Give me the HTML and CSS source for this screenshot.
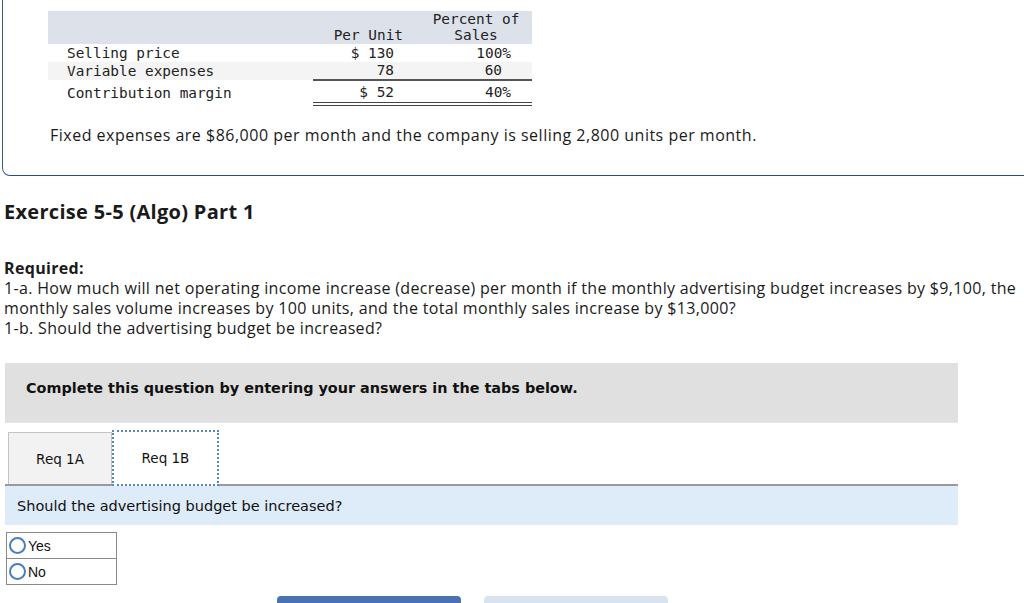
FILE: index.html
```html
<!DOCTYPE html>
<html>
<head>
<meta charset="utf-8">
<link rel="stylesheet" href="styles.css">
</head>
<body>
<div class="card">
  <table class="cm">
    <tr class="head">
      <td class="lbl"></td>
      <td class="pu">Per Unit</td>
      <td class="pct">Percent of<br>Sales</td>
    </tr>
    <tr class="r1">
      <td class="lbl">Selling price</td>
      <td class="num">$ 130</td>
      <td class="pnum">100%</td>
    </tr>
    <tr class="r2">
      <td class="lbl">Variable expenses</td>
      <td class="num under">78</td>
      <td class="pnum under nopct">60</td>
    </tr>
    <tr class="r3">
      <td class="lbl">Contribution margin</td>
      <td class="num dbl">$ 52</td>
      <td class="pnum dbl">40%</td>
    </tr>
  </table>
  <p class="fixed">Fixed expenses are $86,000 per month and the company is selling 2,800 units per month.</p>
</div>

<h2 class="title">Exercise 5-5 (Algo) Part 1</h2>

<div class="req">
  <div class="req-h">Required:</div>
  <div>1-a. How much will net operating income increase (decrease) per month if the monthly advertising budget increases by $9,100, the</div>
  <div>monthly sales volume increases by 100 units, and the total monthly sales increase by $13,000?</div>
  <div>1-b. Should the advertising budget be increased?</div>
</div>

<div class="instr">Complete this question by entering your answers in the tabs below.</div>

<div class="tabs">
  <div class="tab tab-a">Req 1A</div>
  <div class="tab tab-b">Req 1B</div>
</div>
<div class="qbar">Should the advertising budget be increased?</div>

<div class="choices">
  <div class="choice"><span class="radio"></span><span>Yes</span></div>
  <div class="choice"><span class="radio"></span><span>No</span></div>
</div>

<div class="buttons">
  <div class="btn btn-prev"></div>
  <div class="btn btn-next"></div>
</div>
</body>
</html>
```

FILE: styles.css
```css
html, body {
  margin: 0;
  padding: 0;
  overflow: hidden;
  background: #ffffff;
}

body {
  font-family: "Open Sans", "Liberation Sans", sans-serif;
  font-size: 16px;
  color: #1a1a1a;
}

.card {
  margin-left: 2px;
  border-left: 1px solid #3a5690;
  border-bottom: 1px solid #2c4b8b;
  border-bottom-left-radius: 8px;
  padding: 11px 0 30px 45px;
}

.cm {
  border-collapse: collapse;
  width: 484px;
  font-family: "DejaVu Sans Mono", monospace;
  font-size: 14.4px;
  color: #222;
}

.cm td {
  padding: 0;
  white-space: nowrap;
}

.cm .lbl { width: 246px; padding-left: 19px; text-align: left; }

.head td {
  background: #dde1e9;
  line-height: 16px;
  padding-bottom: 1px;
  vertical-align: bottom;
}

.head .pu { width: 90px; text-align: right; padding-right: 17px; }
.head .pct { text-align: center; }

.r1 td { line-height: 18px; }
.r2 td { line-height: 17px; background: #f4f4f4; }
.r3 td { line-height: 19px; padding-top: 2px; }

.num { text-align: right; padding-right: 26px !important; }
.pnum { text-align: right; padding-right: 21px !important; }
.pnum.nopct { padding-right: 30px !important; }

.under { border-bottom: 2px solid #555; }
.dbl { border-bottom: 4px double #444; }

.fixed {
  margin: 19px 0 0 2px;
  line-height: 20px;
  letter-spacing: 0.5px;
}

.title {
  margin: 24px 0 0 4px;
  font-size: 20px;
  line-height: 24px;
  font-weight: 700;
  letter-spacing: 0.3px;
  color: #1a1a1a;
}

.req {
  margin: 34px 0 0 4px;
  line-height: 20px;
  letter-spacing: 0.33px;
  white-space: nowrap;
}

.req-h { font-weight: 700; }

.instr {
  margin: 25px 0 0 5px;
  width: 932px;
  height: 59px;
  padding-left: 21px;
  background: #e0e0e0;
  border-bottom: 1px solid #e6e6e6;
  font-family: "DejaVu Sans", Verdana, sans-serif;
  font-weight: 700;
  font-size: 14.4px;
  line-height: 50px;
  color: #111;
}

.tabs {
  display: flex;
  align-items: flex-end;
  margin: 7px 0 0 5px;
  width: 950px;
  padding-left: 3px;
  border-bottom: 2px solid #9a9a9a;
  font-family: "DejaVu Sans", Verdana, sans-serif;
  font-size: 13.5px;
  color: #111;
}

.tab {
  display: flex;
  align-items: center;
  justify-content: center;
}

.tab-a {
  width: 102px;
  height: 51px;
  background: #f2f2f2;
  border: 1px solid #c4c4c4;
  border-bottom: none;
}

.tab-b {
  width: 103px;
  height: 52px;
  background: #ffffff;
  border: 2px dotted #5a84c6;
  margin-bottom: -2px;
  position: relative;
  z-index: 1;
}

.qbar {
  margin-left: 5px;
  width: 941px;
  height: 39px;
  padding-left: 12px;
  background: #deebf8;
  font-family: "DejaVu Sans", Verdana, sans-serif;
  font-size: 14.5px;
  line-height: 40px;
  color: #111;
}

.choices {
  margin: 7px 0 0 6px;
  width: 109px;
  border: 1px solid #8a8a8a;
  font-family: "Liberation Sans", Arial, sans-serif;
  font-size: 14px;
  color: #111;
}

.choice {
  display: flex;
  align-items: center;
  height: 25px;
  padding-left: 2px;
}

.choice + .choice { border-top: 1px solid #8a8a8a; }

.radio {
  width: 13px;
  height: 13px;
  border: 2.5px solid #4a7bc6;
  border-radius: 50%;
  margin-right: 2px;
  flex: none;
}

.buttons {
  display: flex;
  gap: 23px;
  margin: 11px 0 0 277px;
}

.btn {
  width: 184px;
  height: 40px;
  border-radius: 4px 4px 0 0;
}

.btn-prev { background: #4a72b1; }
.btn-next { background: #d9e3ef; }
```
